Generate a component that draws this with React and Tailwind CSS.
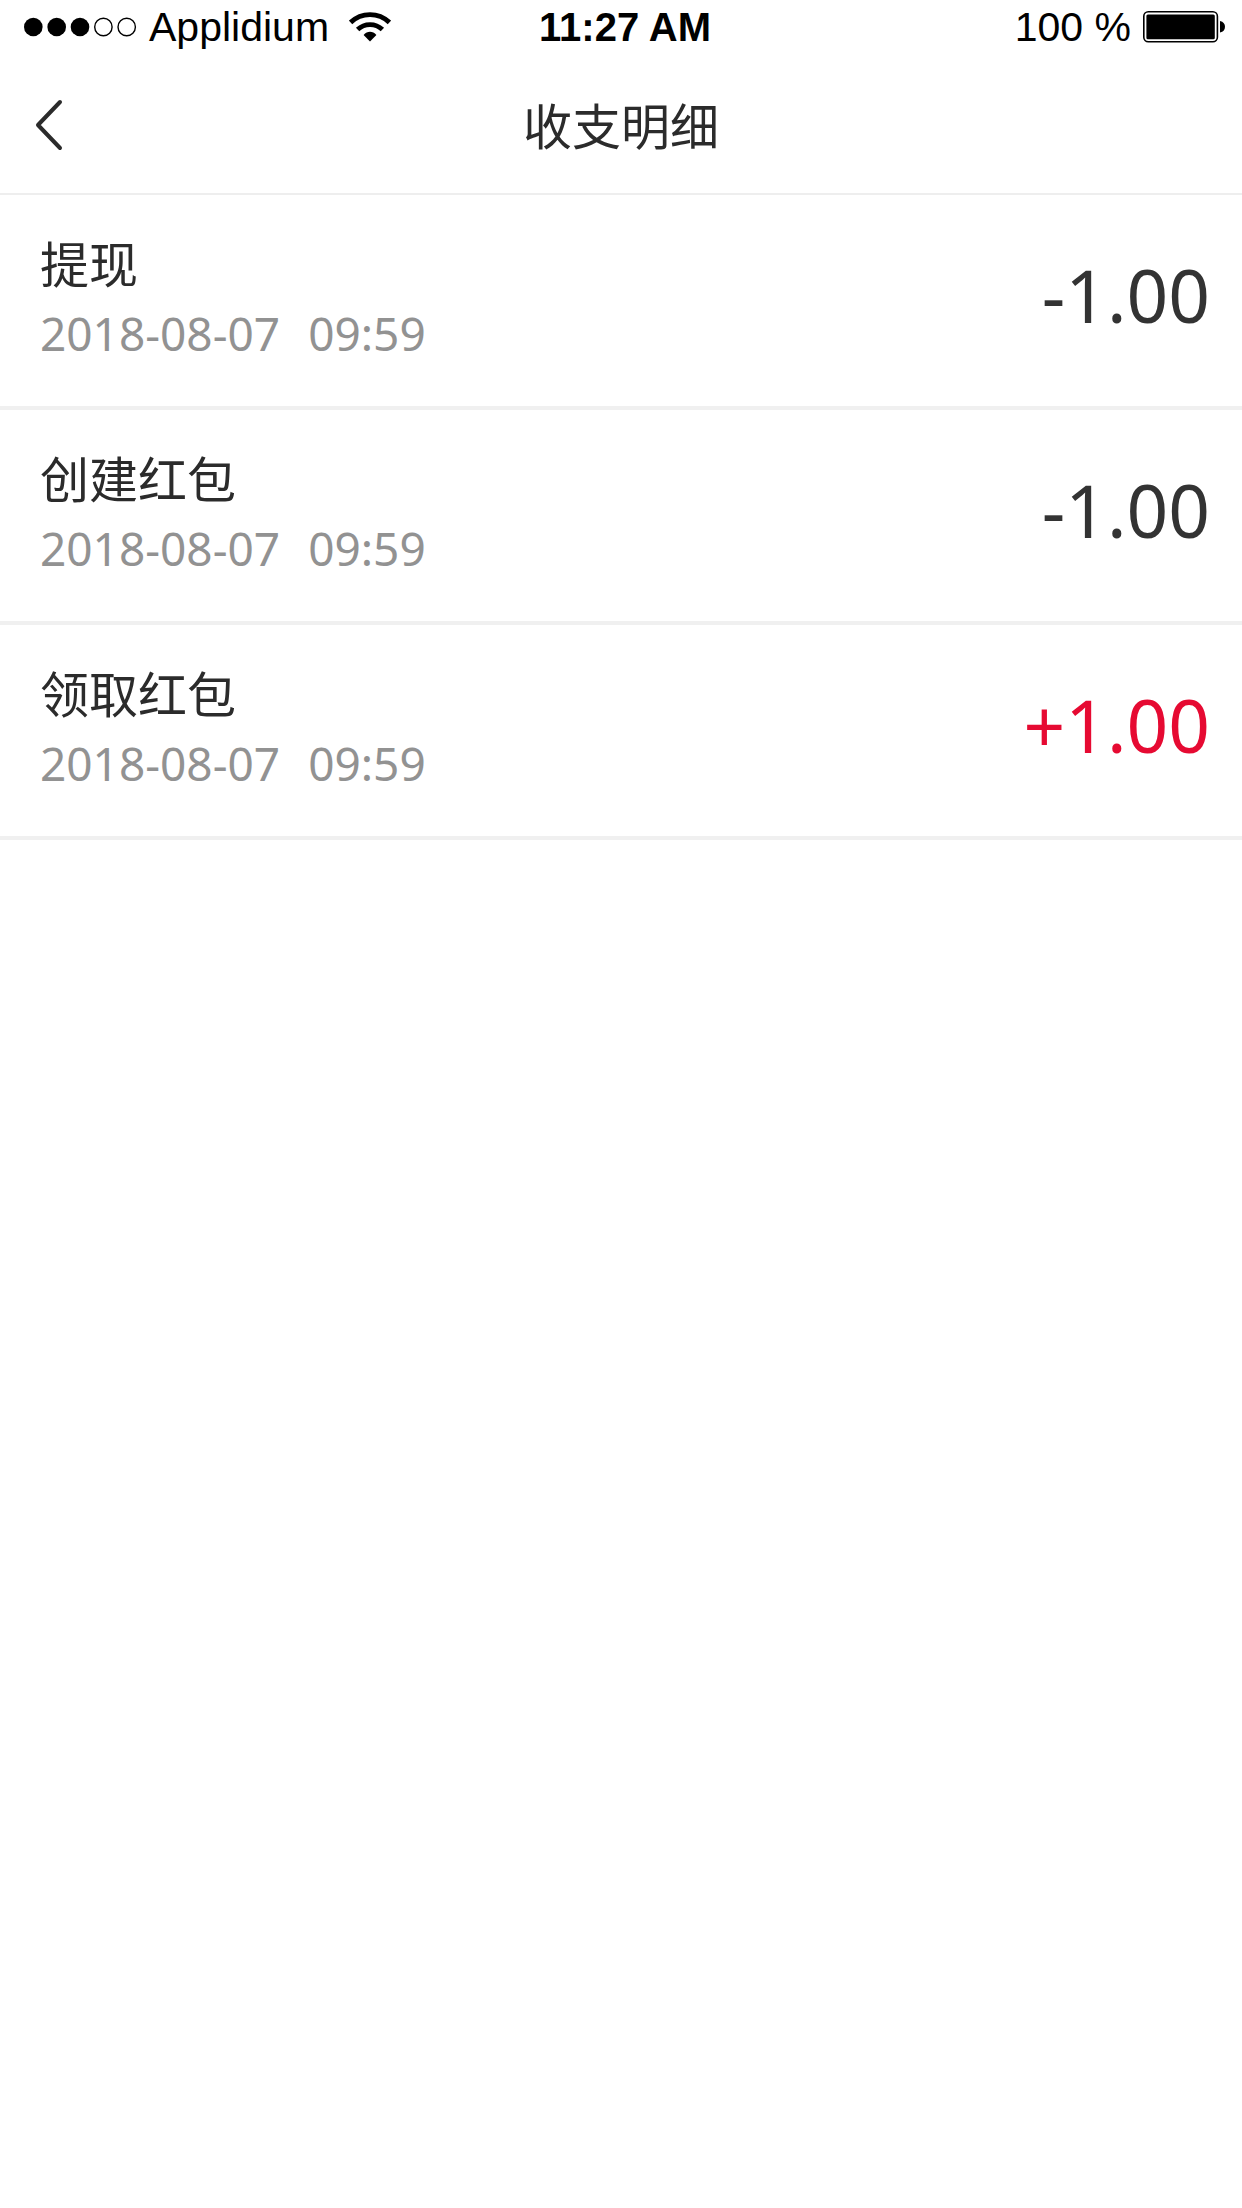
const records = [
  { id: 1, title: "提现", date: "2018-08-07", time: "09:59", amount: "-1.00" },
  { id: 2, title: "创建红包", date: "2018-08-07", time: "09:59", amount: "-1.00" },
  { id: 3, title: "领取红包", date: "2018-08-07", time: "09:59", amount: "+1.00" },
];

function SignalDots() {
  return (
    <svg width="113" height="20" viewBox="0 0 113 20" aria-hidden="true">
      <circle cx="9.3" cy="10" r="9.3" />
      <circle cx="32.7" cy="10" r="9.3" />
      <circle cx="56" cy="10" r="9.3" />
      <circle cx="79.4" cy="10" r="8.7" fill="none" stroke="black" strokeWidth="1.4" />
      <circle cx="102.7" cy="10" r="8.7" fill="none" stroke="black" strokeWidth="1.4" />
    </svg>
  );
}

function WifiIcon() {
  return (
    <svg width="42" height="30" viewBox="0 0 42 30" fill="none" stroke="black" strokeWidth="4.8" aria-hidden="true">
      <path d="M1.6 10.4C12.5 0 29.5 0 40.4 10.4" />
      <path d="M8.6 17.6C15.5 11 26.5 11 33.4 17.6" />
      <path d="M14.6 23C18.2 18.8 23.8 18.8 27.4 23L21 29.6Z" fill="black" stroke="none" />
    </svg>
  );
}

function BatteryIcon() {
  return (
    <svg width="83" height="32" viewBox="0 0 83 32" aria-hidden="true">
      <rect x="0.8" y="0.8" width="73.6" height="30" rx="4.5" fill="none" stroke="black" strokeWidth="1.6" />
      <rect x="3.4" y="3.4" width="68.4" height="24.8" rx="1.5" />
      <path d="M77 10C80.5 10.8 82 13 82 15.8C82 18.6 80.5 20.8 77 21.6Z" />
    </svg>
  );
}

function StatusBar() {
  return (
    <div className="grid h-14 grid-cols-[1fr_auto_1fr] items-center pr-4 pb-0.5 pl-6 font-['Liberation_Sans',Arial,sans-serif] text-[41px] leading-none text-black">
      <div className="flex items-center">
        <SignalDots />
        <span className="ml-3">Applidium</span>
        <span className="ml-5">
          <WifiIcon />
        </span>
      </div>
      <span className="text-[40px] font-bold">11:27 AM</span>
      <div className="flex items-center justify-end gap-3">
        <span>100 %</span>
        <BatteryIcon />
      </div>
    </div>
  );
}

function NavBar({ title }) {
  return (
    <header className="grid grid-cols-[1fr_auto_1fr] items-center border-b-2 border-[#eeeeee] px-8">
      <button type="button" aria-label="返回" className="flex h-[137px] w-10 items-center">
        <svg width="34" height="52" viewBox="0 0 34 52" fill="none" stroke="#2b2b2b" strokeWidth="4" strokeLinecap="round" strokeLinejoin="round" aria-hidden="true">
          <path d="M28 3L6 26L28 49" />
        </svg>
      </button>
      <h1 className="pt-1 text-[49px] leading-none">{title}</h1>
    </header>
  );
}

function RecordRow({ record }) {
  const income = record.amount.startsWith("+");

  return (
    <li className="flex items-center justify-between border-b-4 border-[#f0f0f0] pt-9 pr-8 pb-11 pl-10">
      <div>
        <p className="text-[49px] leading-[66px]">{record.title}</p>
        <p className="flex gap-7 pt-2 text-[46px] leading-[57px] text-[#929292]">
          <span>{record.date}</span>
          <span>{record.time}</span>
        </p>
      </div>
      <span className={`pb-1 text-[73px] leading-none ${income ? "text-[#e60a32]" : "text-[#333333]"}`}>
        {record.amount}
      </span>
    </li>
  );
}

export default function App() {
  return (
    <div className="min-h-screen bg-white font-['Noto_Sans','Noto_Sans_CJK_SC',sans-serif] text-[#2b2b2b]">
      <StatusBar />
      <NavBar title="收支明细" />
      <main>
        <ul>
          {records.map((record) => (
            <RecordRow key={record.id} record={record} />
          ))}
        </ul>
      </main>
    </div>
  );
}
